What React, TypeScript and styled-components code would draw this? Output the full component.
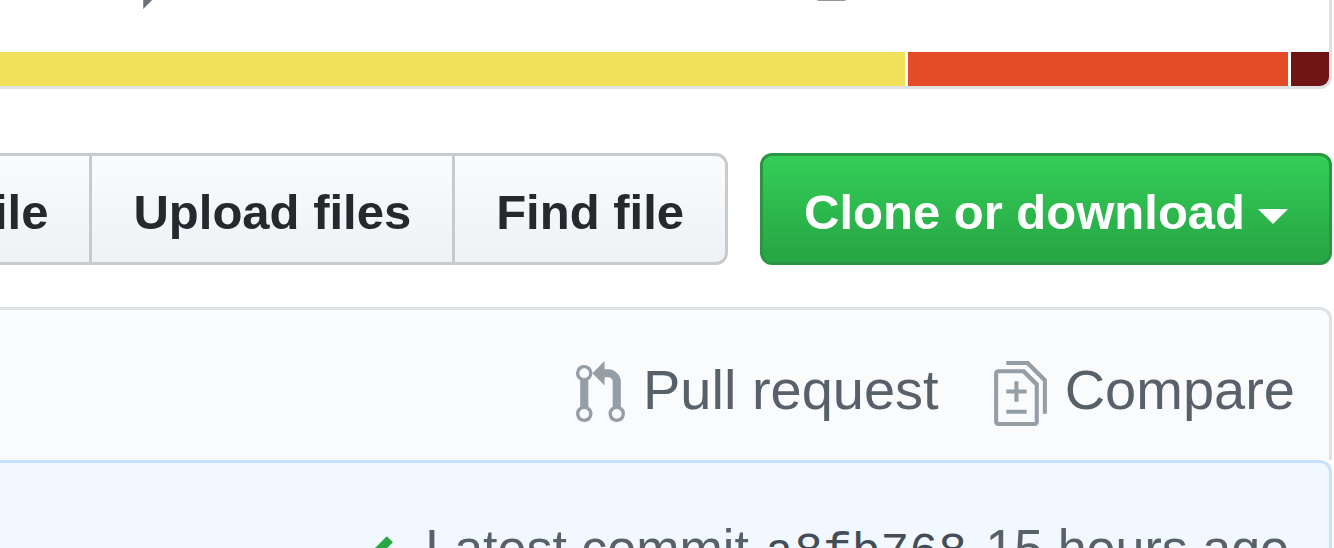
import React from "react";
import styled, { createGlobalStyle } from "styled-components";

const GlobalStyle = createGlobalStyle`
  *, *::before, *::after { box-sizing: border-box; }
  body {
    margin: 0;
    background: #fff;
    color: #24292e;
    font-family: "Liberation Sans", Arial, sans-serif;
  }
`;

const Page = styled.main`
  height: 100vh;
  overflow: hidden;
  padding-right: 2px;
  display: flex;
  flex-direction: column;
`;

const Overview = styled.section`
  flex: none;
  border: solid #dfe2e5;
  border-width: 0 3px 3px 0;
  border-radius: 0 0 12px 0;
`;

const Stats = styled.div`
  height: 52px;
  padding: 0 481px 37px 127px;
  display: flex;
  justify-content: space-between;
  align-items: flex-end;
  color: #6a737d;
`;

const Icon = styled.svg`
  flex: none;
  display: block;
  fill: currentColor;
`;

const LanguageBar = styled.div`
  display: flex;
  gap: 3px;
  height: 34px;
  overflow: hidden;
  border-radius: 0 0 9px 0;
`;

const Language = styled.span<{ $share: number; $color: string }>`
  flex: ${(p) => p.$share} 1 0;
  background: ${(p) => p.$color};
`;

const Toolbar = styled.div`
  flex: none;
  display: flex;
  justify-content: flex-end;
  gap: 32px;
  margin: 64px 0 42px;
`;

const ButtonGroup = styled.div`
  display: flex;
`;

const Button = styled.button<{ $primary?: boolean }>`
  flex: none;
  display: flex;
  align-items: center;
  gap: 13px;
  height: 112px;
  padding: 6px 41px 0;
  font: bold 49px/72px "Liberation Sans", Arial, sans-serif;
  font-variant-ligatures: none;
  white-space: nowrap;
  color: ${(p) => (p.$primary ? "#fff" : "#24292e")};
  border: 3px solid ${(p) => (p.$primary ? "#2b9642" : "#c8cbce")};
  border-radius: 12px;
  background: ${(p) =>
    p.$primary
      ? "linear-gradient(#34d058, #28a745 90%)"
      : "linear-gradient(#fafbfc, #eff3f6 90%)"};
  background-origin: border-box;

  ${ButtonGroup} &:not(:last-child) {
    border-right: 0;
    border-radius: 0;
  }
  ${ButtonGroup} &:last-child {
    border-radius: 0 12px 12px 0;
  }
`;

const Caret = styled.span`
  border: solid transparent;
  border-width: 15px 15px 0;
  border-top-color: #fff;
  margin-top: 8px;
`;

const BranchBar = styled.nav`
  flex: none;
  display: flex;
  justify-content: flex-end;
  align-items: center;
  gap: 55px;
  height: 153px;
  padding: 16px 34px 0 0;
  border: solid #dfe2e5;
  border-width: 3px 3px 0 0;
  border-radius: 0 12px 0 0;
  background: #fafbfc;
`;

const BranchLink = styled.a`
  display: flex;
  align-items: center;
  gap: 18px;
  font-size: 56px;
  line-height: 72px;
  white-space: nowrap;
  color: #586069;
  text-decoration: none;

  ${Icon} {
    color: #959da5;
  }
`;

const Label = styled.span`
  padding-bottom: 6px;
`;

const Commit = styled.div`
  flex: none;
  display: flex;
  justify-content: flex-end;
  align-items: center;
  gap: 32px;
  height: 186px;
  padding-right: 40px;
  border: solid #c8e1ff;
  border-width: 3px 3px 0 0;
  border-radius: 0 12px 0 0;
  background: #f1f8ff;
  color: #586069;
  font-size: 52px;
  line-height: 72px;
  white-space: nowrap;

  ${Label} {
    padding-bottom: 8px;
  }
`;

const Sha = styled.a`
  margin: 0 4px 0 2px;
  font-family: "Liberation Mono", monospace;
  font-size: 48px;
  color: #444d56;
  text-decoration: none;
`;

const paths = {
  comment:
    "M14 1H2c-.55 0-1 .45-1 1v8c0 .55.45 1 1 1h2v3.5L7.5 11H14c.55 0 1-.45 1-1V2c0-.55-.45-1-1-1zm0 9H7l-2 2v-2H2V2h12v8z",
  box: "M1 1h6c.55 0 1 .45 1 1v9.7c0 .5-.4.8-1 .8H1c-.6 0-1-.3-1-.8V2c0-.55.45-1 1-1zm0 1v9.5h6V2H1z",
  pull: "M11 11.28V5c-.03-.78-.34-1.47-.94-2.06C9.46 2.35 8.78 2.03 8 2H7V0L4 3l3 3V4h1c.27.02.48.11.69.31.21.2.3.42.31.69v6.28A1.993 1.993 0 0 0 10 15a1.993 1.993 0 0 0 1-3.72zm-1 2.92c-.66 0-1.2-.55-1.2-1.2 0-.65.55-1.2 1.2-1.2.65 0 1.2.55 1.2 1.2 0 .65-.55 1.2-1.2 1.2zM4 3c0-1.11-.89-2-2-2a1.993 1.993 0 0 0-1 3.72v6.56A1.993 1.993 0 0 0 2 15a1.993 1.993 0 0 0 1-3.72V4.72c.59-.34 1-.98 1-1.72zm-.8 10c0 .66-.55 1.2-1.2 1.2-.65 0-1.2-.55-1.2-1.2 0-.65.55-1.2 1.2-1.2.65 0 1.2.55 1.2 1.2zM2 4.2C1.34 4.2.8 3.65.8 3c0-.65.55-1.2 1.2-1.2.65 0 1.2.55 1.2 1.2 0 .65-.55 1.2-1.2 1.2z",
  diff: "M6 7h2v1H6v2H5V8H3V7h2V5h1v2zm-3 6h5v-1H3v1zM7.5 2L11 5.5V15c0 .55-.45 1-1 1H1c-.55 0-1-.45-1-1V3c0-.55.45-1 1-1h6.5zM10 6L7 3H1v12h9V6zM8.5 0H3v1h5l4 4v8h1V4.5L8.5 0z",
  check: "M12 5l-8 8-4-4 1.5-1.5L4 10l6.5-6.5L12 5z",
};

const Glyph = ({ name, units, width, color }: {
  name: keyof typeof paths;
  units: number;
  width: number;
  color?: string;
}) => (
  <Icon width={width} height={65} viewBox={`0 0 ${units} 16`} color={color} aria-hidden="true">
    <path fillRule="evenodd" d={paths[name]} />
  </Icon>
);

const languages = [
  { share: 905, color: "#f1e05a" },
  { share: 380, color: "#e34c26" },
  { share: 38, color: "#701516" },
];

export default function App() {
  return (
    <>
      <GlobalStyle />
      <Page>
        <Overview>
          <Stats>
            <Glyph name="comment" units={16} width={65} />
            <Glyph name="box" units={8} width={33} />
          </Stats>
          <LanguageBar>
            {languages.map((l) => (
              <Language key={l.color} $share={l.share} $color={l.color} />
            ))}
          </LanguageBar>
        </Overview>
        <Toolbar>
          <ButtonGroup>
            <Button type="button">Create new file</Button>
            <Button type="button">Upload files</Button>
            <Button type="button">Find file</Button>
          </ButtonGroup>
          <Button type="button" $primary>
            Clone or download
            <Caret />
          </Button>
        </Toolbar>
        <BranchBar>
          <BranchLink href="#pull">
            <Glyph name="pull" units={12} width={49} />
            <Label>Pull request</Label>
          </BranchLink>
          <BranchLink href="#compare">
            <Glyph name="diff" units={13} width={53} />
            <Label>Compare</Label>
          </BranchLink>
        </BranchBar>
        <Commit>
          <Glyph name="check" units={12} width={49} color="#28a745" />
          <Label>
            Latest commit <Sha href="#commit">a8fb768</Sha> 15 hours ago
          </Label>
        </Commit>
      </Page>
    </>
  );
}
